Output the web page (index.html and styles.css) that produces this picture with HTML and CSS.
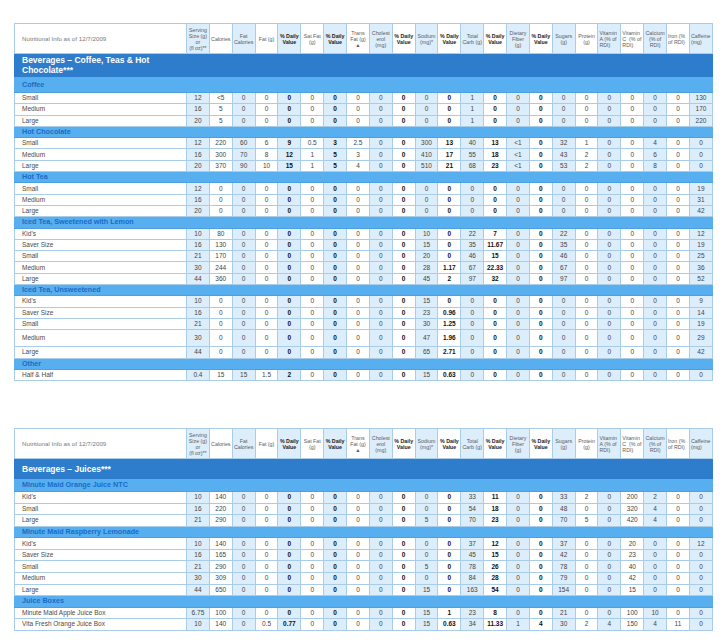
FILE: index.html
```html
<!DOCTYPE html>
<html>
<head>
<meta charset="utf-8">
<link rel="stylesheet" href="styles.css">
</head>
<body>
<div class="page">

<table class="facts">
<colgroup><col class="c-name"><col span="23"></colgroup>
<thead>
<tr class="hd">
<th class="info">Nutritional Info as of 12/7/2009</th>
<th>Serving<br>Size (g)<br>or<br>(fl oz)**</th>
<th>Calories</th>
<th>Fat<br>Calories</th>
<th>Fat (g)</th>
<th class="bh">% Daily<br>Value</th>
<th>Sat Fat<br>(g)</th>
<th class="bh">% Daily<br>Value</th>
<th>Trans<br>Fat (g)<br>&#9650;</th>
<th>Cholest<br>erol<br>(mg)</th>
<th class="bh">% Daily<br>Value</th>
<th>Sodium<br>(mg)*</th>
<th class="bh">% Daily<br>Value</th>
<th>Total<br>Carb (g)</th>
<th class="bh">% Daily<br>Value</th>
<th>Dietary<br>Fiber<br>(g)</th>
<th class="bh">% Daily<br>Value</th>
<th>Sugars<br>(g)</th>
<th>Protein<br>(g)</th>
<th class="lh">Vitamin<br>A (% of<br>RDI)</th>
<th class="lh">Vitamin<br>C &nbsp;(% of<br>RDI)</th>
<th>Calcium<br>(% of<br>RDI)</th>
<th class="lh">Iron (%<br>of RDI)</th>
<th class="lh">Caffeine<br>(mg)</th>
</tr>
</thead>
<tbody>
<tr class="title two"><td class="t">Beverages – Coffee, Teas &amp; Hot Chocolate***</td><td colspan="23"></td></tr>
<tr class="sub first"><td class="t">Coffee</td><td></td><td></td><td></td><td></td><td></td><td></td><td></td><td></td><td></td><td></td><td></td><td></td><td></td><td></td><td></td><td></td><td></td><td></td><td></td><td></td><td></td><td></td><td></td></tr>
<tr><td>Small</td><td>12</td><td>&lt;5</td><td>0</td><td>0</td><td>0</td><td>0</td><td>0</td><td>0</td><td>0</td><td>0</td><td>0</td><td>0</td><td>1</td><td>0</td><td>0</td><td>0</td><td>0</td><td>0</td><td>0</td><td>0</td><td>0</td><td>0</td><td>130</td></tr>
<tr><td>Medium</td><td>16</td><td>5</td><td>0</td><td>0</td><td>0</td><td>0</td><td>0</td><td>0</td><td>0</td><td>0</td><td>0</td><td>0</td><td>1</td><td>0</td><td>0</td><td>0</td><td>0</td><td>0</td><td>0</td><td>0</td><td>0</td><td>0</td><td>170</td></tr>
<tr><td>Large</td><td>20</td><td>5</td><td>0</td><td>0</td><td>0</td><td>0</td><td>0</td><td>0</td><td>0</td><td>0</td><td>0</td><td>0</td><td>1</td><td>0</td><td>0</td><td>0</td><td>0</td><td>0</td><td>0</td><td>0</td><td>0</td><td>0</td><td>220</td></tr>
<tr class="sub"><td class="t">Hot Chocolate</td><td></td><td></td><td></td><td></td><td></td><td></td><td></td><td></td><td></td><td></td><td></td><td></td><td></td><td></td><td></td><td></td><td></td><td></td><td></td><td></td><td></td><td></td><td></td></tr>
<tr><td>Small</td><td>12</td><td>220</td><td>60</td><td>6</td><td>9</td><td>0.5</td><td>3</td><td>2.5</td><td>0</td><td>0</td><td>300</td><td>13</td><td>40</td><td>13</td><td>&lt;1</td><td>0</td><td>32</td><td>1</td><td>0</td><td>0</td><td>4</td><td>0</td><td>0</td></tr>
<tr><td>Medium</td><td>16</td><td>300</td><td>70</td><td>8</td><td>12</td><td>1</td><td>5</td><td>3</td><td>0</td><td>0</td><td>410</td><td>17</td><td>55</td><td>18</td><td>&lt;1</td><td>0</td><td>43</td><td>2</td><td>0</td><td>0</td><td>6</td><td>0</td><td>0</td></tr>
<tr><td>Large</td><td>20</td><td>370</td><td>90</td><td>10</td><td>15</td><td>1</td><td>5</td><td>4</td><td>0</td><td>0</td><td>510</td><td>21</td><td>68</td><td>23</td><td>&lt;1</td><td>0</td><td>53</td><td>2</td><td>0</td><td>0</td><td>8</td><td>0</td><td>0</td></tr>
<tr class="sub"><td class="t">Hot Tea</td><td></td><td></td><td></td><td></td><td></td><td></td><td></td><td></td><td></td><td></td><td></td><td></td><td></td><td></td><td></td><td></td><td></td><td></td><td></td><td></td><td></td><td></td><td></td></tr>
<tr><td>Small</td><td>12</td><td>0</td><td>0</td><td>0</td><td>0</td><td>0</td><td>0</td><td>0</td><td>0</td><td>0</td><td>0</td><td>0</td><td>0</td><td>0</td><td>0</td><td>0</td><td>0</td><td>0</td><td>0</td><td>0</td><td>0</td><td>0</td><td>19</td></tr>
<tr><td>Medium</td><td>16</td><td>0</td><td>0</td><td>0</td><td>0</td><td>0</td><td>0</td><td>0</td><td>0</td><td>0</td><td>0</td><td>0</td><td>0</td><td>0</td><td>0</td><td>0</td><td>0</td><td>0</td><td>0</td><td>0</td><td>0</td><td>0</td><td>31</td></tr>
<tr><td>Large</td><td>20</td><td>0</td><td>0</td><td>0</td><td>0</td><td>0</td><td>0</td><td>0</td><td>0</td><td>0</td><td>0</td><td>0</td><td>0</td><td>0</td><td>0</td><td>0</td><td>0</td><td>0</td><td>0</td><td>0</td><td>0</td><td>0</td><td>42</td></tr>
<tr class="sub"><td class="t">Iced Tea, Sweetened with Lemon</td><td></td><td></td><td></td><td></td><td></td><td></td><td></td><td></td><td></td><td></td><td></td><td></td><td></td><td></td><td></td><td></td><td></td><td></td><td></td><td></td><td></td><td></td><td></td></tr>
<tr><td>Kid's</td><td>10</td><td>80</td><td>0</td><td>0</td><td>0</td><td>0</td><td>0</td><td>0</td><td>0</td><td>0</td><td>10</td><td>0</td><td>22</td><td>7</td><td>0</td><td>0</td><td>22</td><td>0</td><td>0</td><td>0</td><td>0</td><td>0</td><td>12</td></tr>
<tr><td>Saver Size</td><td>16</td><td>130</td><td>0</td><td>0</td><td>0</td><td>0</td><td>0</td><td>0</td><td>0</td><td>0</td><td>15</td><td>0</td><td>35</td><td>11.67</td><td>0</td><td>0</td><td>35</td><td>0</td><td>0</td><td>0</td><td>0</td><td>0</td><td>19</td></tr>
<tr><td>Small</td><td>21</td><td>170</td><td>0</td><td>0</td><td>0</td><td>0</td><td>0</td><td>0</td><td>0</td><td>0</td><td>20</td><td>0</td><td>46</td><td>15</td><td>0</td><td>0</td><td>46</td><td>0</td><td>0</td><td>0</td><td>0</td><td>0</td><td>25</td></tr>
<tr><td>Medium</td><td>30</td><td>244</td><td>0</td><td>0</td><td>0</td><td>0</td><td>0</td><td>0</td><td>0</td><td>0</td><td>28</td><td>1.17</td><td>67</td><td>22.33</td><td>0</td><td>0</td><td>67</td><td>0</td><td>0</td><td>0</td><td>0</td><td>0</td><td>36</td></tr>
<tr><td>Large</td><td>44</td><td>360</td><td>0</td><td>0</td><td>0</td><td>0</td><td>0</td><td>0</td><td>0</td><td>0</td><td>45</td><td>2</td><td>97</td><td>32</td><td>0</td><td>0</td><td>97</td><td>0</td><td>0</td><td>0</td><td>0</td><td>0</td><td>52</td></tr>
<tr class="sub"><td class="t">Iced Tea, Unsweetened</td><td></td><td></td><td></td><td></td><td></td><td></td><td></td><td></td><td></td><td></td><td></td><td></td><td></td><td></td><td></td><td></td><td></td><td></td><td></td><td></td><td></td><td></td><td></td></tr>
<tr><td>Kid's</td><td>10</td><td>0</td><td>0</td><td>0</td><td>0</td><td>0</td><td>0</td><td>0</td><td>0</td><td>0</td><td>15</td><td>0</td><td>0</td><td>0</td><td>0</td><td>0</td><td>0</td><td>0</td><td>0</td><td>0</td><td>0</td><td>0</td><td>9</td></tr>
<tr><td>Saver Size</td><td>16</td><td>0</td><td>0</td><td>0</td><td>0</td><td>0</td><td>0</td><td>0</td><td>0</td><td>0</td><td>23</td><td>0.96</td><td>0</td><td>0</td><td>0</td><td>0</td><td>0</td><td>0</td><td>0</td><td>0</td><td>0</td><td>0</td><td>14</td></tr>
<tr><td>Small</td><td>21</td><td>0</td><td>0</td><td>0</td><td>0</td><td>0</td><td>0</td><td>0</td><td>0</td><td>0</td><td>30</td><td>1.25</td><td>0</td><td>0</td><td>0</td><td>0</td><td>0</td><td>0</td><td>0</td><td>0</td><td>0</td><td>0</td><td>19</td></tr>
<tr class="tall"><td>Medium</td><td>30</td><td>0</td><td>0</td><td>0</td><td>0</td><td>0</td><td>0</td><td>0</td><td>0</td><td>0</td><td>47</td><td>1.96</td><td>0</td><td>0</td><td>0</td><td>0</td><td>0</td><td>0</td><td>0</td><td>0</td><td>0</td><td>0</td><td>29</td></tr>
<tr><td>Large</td><td>44</td><td>0</td><td>0</td><td>0</td><td>0</td><td>0</td><td>0</td><td>0</td><td>0</td><td>0</td><td>65</td><td>2.71</td><td>0</td><td>0</td><td>0</td><td>0</td><td>0</td><td>0</td><td>0</td><td>0</td><td>0</td><td>0</td><td>42</td></tr>
<tr class="sub"><td class="t">Other</td><td></td><td></td><td></td><td></td><td></td><td></td><td></td><td></td><td></td><td></td><td></td><td></td><td></td><td></td><td></td><td></td><td></td><td></td><td></td><td></td><td></td><td></td><td></td></tr>
<tr><td>Half &amp; Half</td><td>0.4</td><td>15</td><td>15</td><td>1.5</td><td>2</td><td>0</td><td>0</td><td>0</td><td>0</td><td>0</td><td>15</td><td>0.63</td><td>0</td><td>0</td><td>0</td><td>0</td><td>0</td><td>0</td><td>0</td><td>0</td><td>0</td><td>0</td><td>0</td></tr>
</tbody>
</table>

<table class="facts second">
<colgroup><col class="c-name"><col span="23"></colgroup>
<thead>
<tr class="hd">
<th class="info">Nutritional Info as of 12/7/2009</th>
<th>Serving<br>Size (g)<br>or<br>(fl oz)**</th>
<th>Calories</th>
<th>Fat<br>Calories</th>
<th>Fat (g)</th>
<th class="bh">% Daily<br>Value</th>
<th>Sat Fat<br>(g)</th>
<th class="bh">% Daily<br>Value</th>
<th>Trans<br>Fat (g)<br>&#9650;</th>
<th>Cholest<br>erol<br>(mg)</th>
<th class="bh">% Daily<br>Value</th>
<th>Sodium<br>(mg)*</th>
<th class="bh">% Daily<br>Value</th>
<th>Total<br>Carb (g)</th>
<th class="bh">% Daily<br>Value</th>
<th>Dietary<br>Fiber<br>(g)</th>
<th class="bh">% Daily<br>Value</th>
<th>Sugars<br>(g)</th>
<th>Protein<br>(g)</th>
<th class="lh">Vitamin<br>A (% of<br>RDI)</th>
<th class="lh">Vitamin<br>C &nbsp;(% of<br>RDI)</th>
<th>Calcium<br>(% of<br>RDI)</th>
<th class="lh">Iron (%<br>of RDI)</th>
<th class="lh">Caffeine<br>(mg)</th>
</tr>
</thead>
<tbody>
<tr class="title"><td class="t">Beverages – Juices***</td><td colspan="23"></td></tr>
<tr class="sub first"><td class="t">Minute Maid Orange Juice NTC</td><td></td><td></td><td></td><td></td><td></td><td></td><td></td><td></td><td></td><td></td><td></td><td></td><td></td><td></td><td></td><td></td><td></td><td></td><td></td><td></td><td></td><td></td><td></td></tr>
<tr><td>Kid's</td><td>10</td><td>140</td><td>0</td><td>0</td><td>0</td><td>0</td><td>0</td><td>0</td><td>0</td><td>0</td><td>0</td><td>0</td><td>33</td><td>11</td><td>0</td><td>0</td><td>33</td><td>2</td><td>0</td><td>200</td><td>2</td><td>0</td><td>0</td></tr>
<tr><td>Small</td><td>16</td><td>220</td><td>0</td><td>0</td><td>0</td><td>0</td><td>0</td><td>0</td><td>0</td><td>0</td><td>0</td><td>0</td><td>54</td><td>18</td><td>0</td><td>0</td><td>48</td><td>0</td><td>0</td><td>320</td><td>4</td><td>0</td><td>0</td></tr>
<tr><td>Large</td><td>21</td><td>290</td><td>0</td><td>0</td><td>0</td><td>0</td><td>0</td><td>0</td><td>0</td><td>0</td><td>5</td><td>0</td><td>70</td><td>23</td><td>0</td><td>0</td><td>70</td><td>5</td><td>0</td><td>420</td><td>4</td><td>0</td><td>0</td></tr>
<tr class="sub"><td class="t">Minute Maid Raspberry Lemonade</td><td></td><td></td><td></td><td></td><td></td><td></td><td></td><td></td><td></td><td></td><td></td><td></td><td></td><td></td><td></td><td></td><td></td><td></td><td></td><td></td><td></td><td></td><td></td></tr>
<tr><td>Kid's</td><td>10</td><td>140</td><td>0</td><td>0</td><td>0</td><td>0</td><td>0</td><td>0</td><td>0</td><td>0</td><td>0</td><td>0</td><td>37</td><td>12</td><td>0</td><td>0</td><td>37</td><td>0</td><td>0</td><td>20</td><td>0</td><td>0</td><td>12</td></tr>
<tr><td>Saver Size</td><td>16</td><td>165</td><td>0</td><td>0</td><td>0</td><td>0</td><td>0</td><td>0</td><td>0</td><td>0</td><td>0</td><td>0</td><td>45</td><td>15</td><td>0</td><td>0</td><td>42</td><td>0</td><td>0</td><td>23</td><td>0</td><td>0</td><td>0</td></tr>
<tr><td>Small</td><td>21</td><td>290</td><td>0</td><td>0</td><td>0</td><td>0</td><td>0</td><td>0</td><td>0</td><td>0</td><td>5</td><td>0</td><td>78</td><td>26</td><td>0</td><td>0</td><td>78</td><td>0</td><td>0</td><td>40</td><td>0</td><td>0</td><td>0</td></tr>
<tr><td>Medium</td><td>30</td><td>309</td><td>0</td><td>0</td><td>0</td><td>0</td><td>0</td><td>0</td><td>0</td><td>0</td><td>0</td><td>0</td><td>84</td><td>28</td><td>0</td><td>0</td><td>79</td><td>0</td><td>0</td><td>42</td><td>0</td><td>0</td><td>0</td></tr>
<tr><td>Large</td><td>44</td><td>650</td><td>0</td><td>0</td><td>0</td><td>0</td><td>0</td><td>0</td><td>0</td><td>0</td><td>15</td><td>0</td><td>163</td><td>54</td><td>0</td><td>0</td><td>154</td><td>0</td><td>0</td><td>15</td><td>0</td><td>0</td><td>0</td></tr>
<tr class="sub"><td class="t">Juice Boxes</td><td></td><td></td><td></td><td></td><td></td><td></td><td></td><td></td><td></td><td></td><td></td><td></td><td></td><td></td><td></td><td></td><td></td><td></td><td></td><td></td><td></td><td></td><td></td></tr>
<tr><td>Minute Maid Apple Juice Box</td><td>6.75</td><td>100</td><td>0</td><td>0</td><td>0</td><td>0</td><td>0</td><td>0</td><td>0</td><td>0</td><td>15</td><td>1</td><td>23</td><td>8</td><td>0</td><td>0</td><td>21</td><td>0</td><td>0</td><td>100</td><td>10</td><td>0</td><td>0</td></tr>
<tr><td>Vita Fresh Orange Juice Box</td><td>10</td><td>140</td><td>0</td><td>0.5</td><td>0.77</td><td>0</td><td>0</td><td>0</td><td>0</td><td>0</td><td>15</td><td>0.63</td><td>34</td><td>11.33</td><td>1</td><td>4</td><td>30</td><td>2</td><td>4</td><td>150</td><td>4</td><td>11</td><td>0</td></tr>
</tbody>
</table>

</div>
</body>
</html>
```
FILE: styles.css
```css
html, body {
  margin: 0;
  padding: 0;
  background: #ffffff;
}

.page {
  padding: 23px 0 0 14px;
  font-family: "Liberation Sans", Arial, sans-serif;
}

.facts {
  width: 699px;
  table-layout: fixed;
  border-collapse: collapse;
  border: 1px solid #3c78b0;
}

.facts.second {
  margin-top: 47px;
}

.c-name {
  width: 172px;
}

.facts th,
.facts td {
  padding: 0;
  border: 1px solid #a9cde9;
  text-align: center;
  vertical-align: middle;
  overflow: hidden;
}

/* header */
.hd {
  height: 30px;
}

.hd th {
  font-size: 5.3px;
  line-height: 6px;
  font-weight: normal;
  color: #5c5c5c;
  padding: 0 1px;
  white-space: nowrap;
}

.hd th.info {
  text-align: left;
  padding-left: 7px;
  font-size: 6.2px;
  color: #7a7a7a;
}

.hd th.bh {
  font-weight: bold;
  color: #222;
}

.hd th.lh {
  text-align: left;
}

/* blue striped columns */
.facts th:nth-child(even),
.facts tbody tr td:nth-child(even) {
  background: #dcedfb;
}

/* data rows */
.facts tbody tr {
  height: 11.3px;
}

.facts.second tbody tr {
  height: 11.55px;
}

.facts tbody td {
  font-size: 6.5px;
  line-height: 8px;
  color: #444;
}

.facts tbody td:first-child {
  text-align: left;
  padding-left: 7px;
  color: #4a4a4a;
  white-space: nowrap;
}

.facts tbody td:nth-child(6),
.facts tbody td:nth-child(8),
.facts tbody td:nth-child(11),
.facts tbody td:nth-child(13),
.facts tbody td:nth-child(15),
.facts tbody td:nth-child(17) {
  font-weight: bold;
  color: #111;
}

.facts tbody tr.tall {
  height: 17px;
}

/* section title */
.facts tbody tr.title {
  height: 20px;
}

.facts tbody tr.title.two {
  height: 22px;
}

.facts tbody tr.title td,
.facts tbody tr.title td:nth-child(even) {
  background: #2e7dcc;
  border-color: #2e7dcc;
}

.facts tbody tr.title td.t {
  font-size: 8.5px;
  line-height: 10px;
  font-weight: bold;
  color: #ffffff;
  white-space: normal;
  padding: 1px 4px 1px 7px;
}

/* sub section */
.facts tbody tr.sub td,
.facts tbody tr.sub td:nth-child(even) {
  background: #58aff0;
  border-color: #4c9fe0;
  border-left-color: #58aff0;
  border-right-color: #58aff0;
}

.facts tbody tr.sub.first {
  height: 16px;
}

.facts.second tbody tr.sub.first {
  height: 13px;
}

.facts tbody tr.sub td.t {
  font-size: 7.2px;
  font-weight: bold;
  color: #1a6cc4;
}
```
